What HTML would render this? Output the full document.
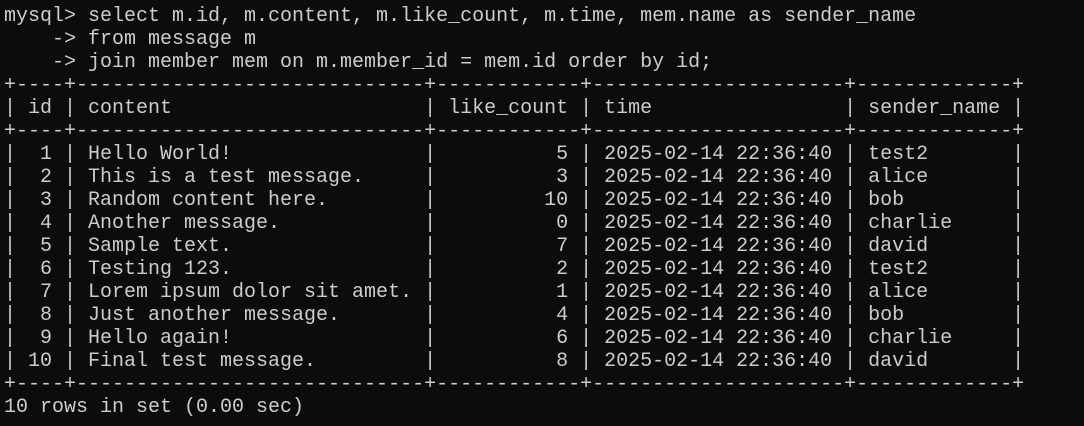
<!DOCTYPE html>
<html><head><meta charset="utf-8"><style>
html,body{margin:0;padding:0;background:#0c0c0c;width:1084px;height:426px;overflow:hidden}
pre{margin:0;padding:5px 0 0 4px;font-family:"Liberation Mono",monospace;font-size:20px;line-height:23px;color:#cccccc;letter-spacing:0}
</style></head><body><pre>mysql&gt; select m.id, m.content, m.like_count, m.time, mem.name as sender_name
    -&gt; from message m
    -&gt; join member mem on m.member_id = mem.id order by id;
+----+-----------------------------+------------+---------------------+-------------+
| id | content                     | like_count | time                | sender_name |
+----+-----------------------------+------------+---------------------+-------------+
|  1 | Hello World!                |          5 | 2025-02-14 22:36:40 | test2       |
|  2 | This is a test message.     |          3 | 2025-02-14 22:36:40 | alice       |
|  3 | Random content here.        |         10 | 2025-02-14 22:36:40 | bob         |
|  4 | Another message.            |          0 | 2025-02-14 22:36:40 | charlie     |
|  5 | Sample text.                |          7 | 2025-02-14 22:36:40 | david       |
|  6 | Testing 123.                |          2 | 2025-02-14 22:36:40 | test2       |
|  7 | Lorem ipsum dolor sit amet. |          1 | 2025-02-14 22:36:40 | alice       |
|  8 | Just another message.       |          4 | 2025-02-14 22:36:40 | bob         |
|  9 | Hello again!                |          6 | 2025-02-14 22:36:40 | charlie     |
| 10 | Final test message.         |          8 | 2025-02-14 22:36:40 | david       |
+----+-----------------------------+------------+---------------------+-------------+
10 rows in set (0.00 sec)</pre></body></html>
